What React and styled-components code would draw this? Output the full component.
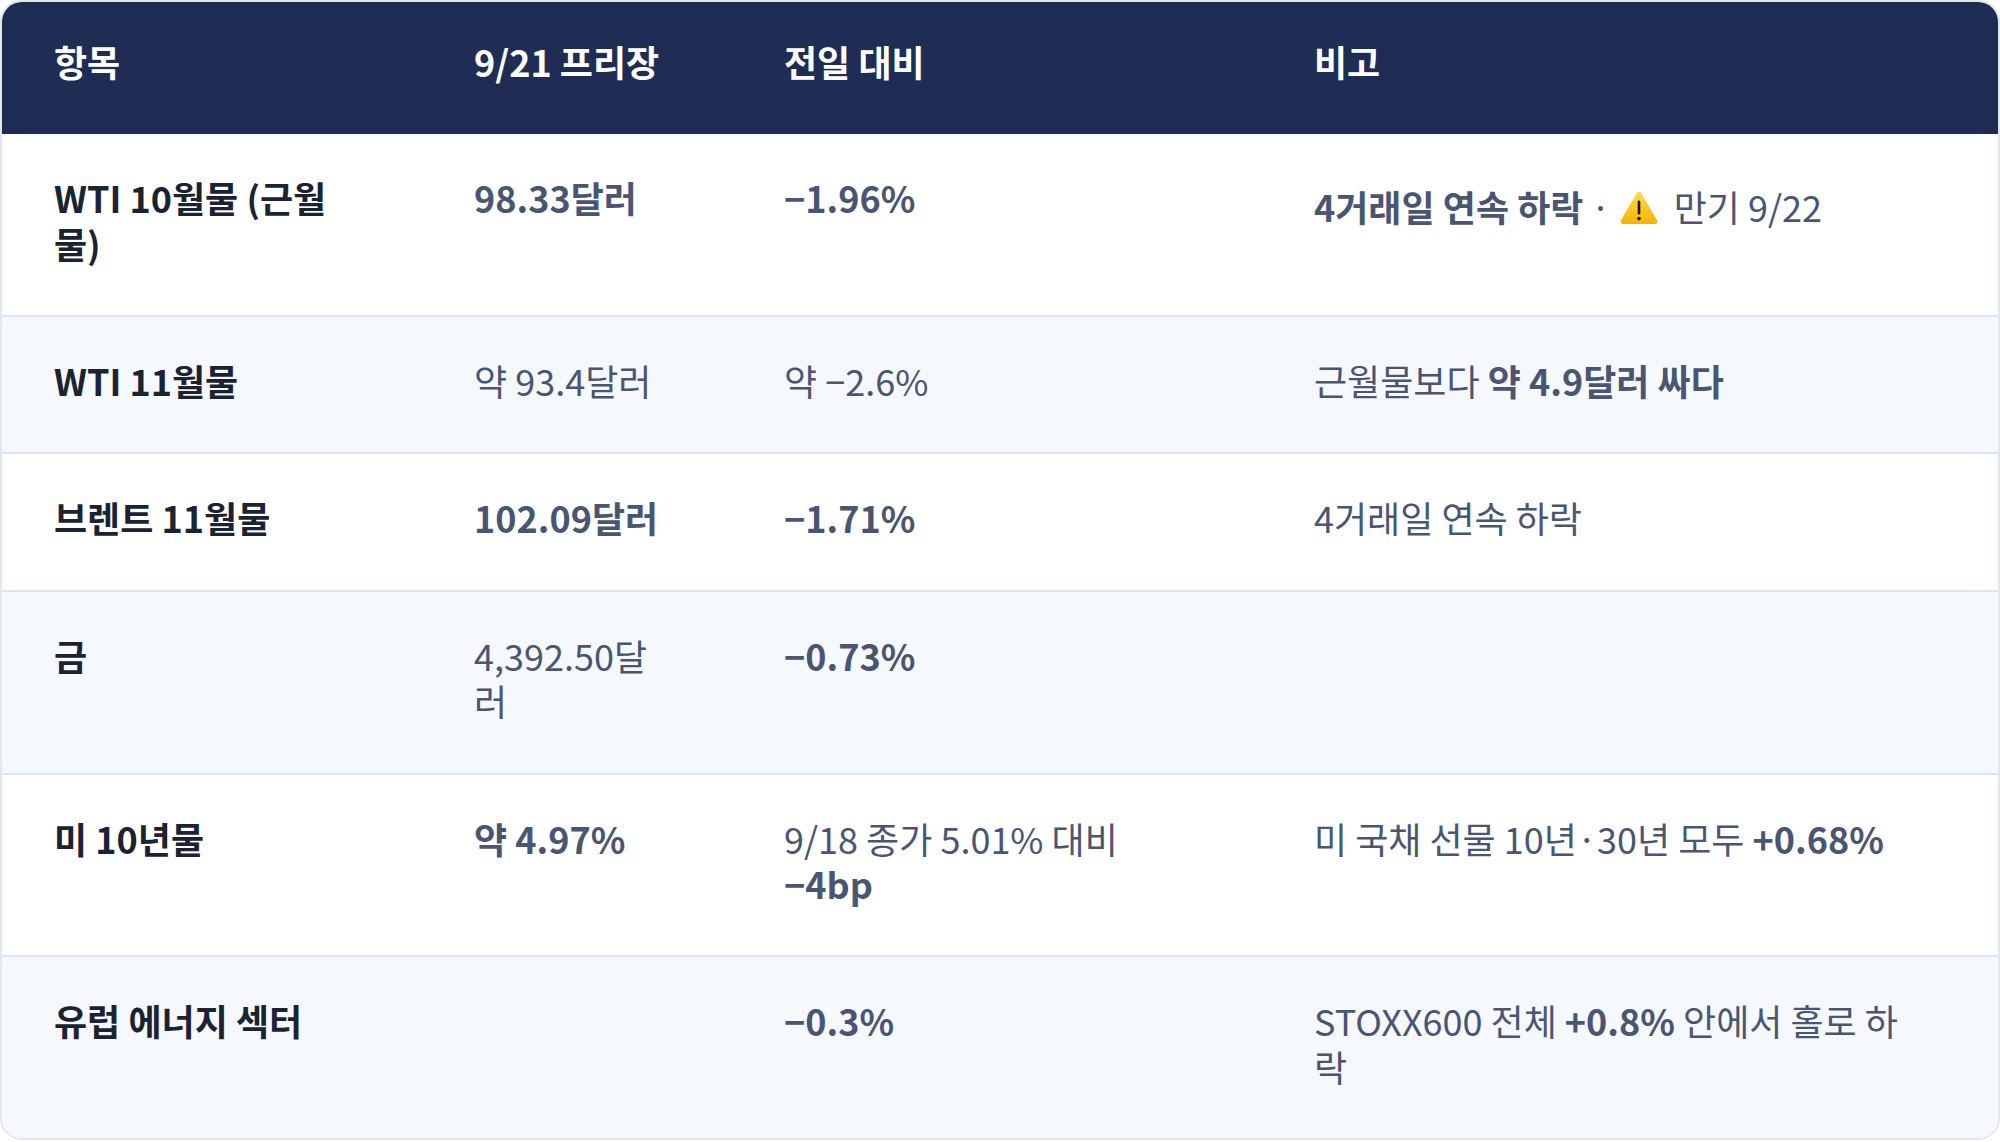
import React from "react";
import styled, { createGlobalStyle } from "styled-components";

const GlobalStyle = createGlobalStyle`
  html, body {
    margin: 0;
    padding: 0;
    background: #ffffff;
  }
  body {
    font-family: "Noto Sans CJK KR", "Noto Sans", sans-serif;
  }
`;

const Card = styled.div`
  width: 2000px;
  box-sizing: border-box;
  border: 2px solid #e1e6ef;
  border-radius: 22px;
  overflow: hidden;
  background: #ffffff;
`;

const Table = styled.table`
  width: 100%;
  border-collapse: collapse;
  table-layout: fixed;
  font-size: 36px;
  line-height: 1.26;
`;

const HeadCell = styled.th`
  background: #1f2c53;
  color: #ffffff;
  font-weight: 700;
  text-align: left;
  padding: 37px 52px 50px;
`;

const Row = styled.tr`
  background: ${(p) => (p.$alt ? "#f5f8fd" : "#ffffff")};
  border-top: 2px solid #dfe5f0;
  &:first-child {
    border-top: none;
  }
`;

const Cell = styled.td`
  vertical-align: top;
  padding: 41px ${(p) => p.$right || 60}px 49px 52px;
  color: #4a5572;
  font-weight: 400;
`;

const ItemCell = styled(Cell)`
  color: #1b2232;
  font-weight: 700;
`;

const Strong = styled.b`
  font-weight: 700;
`;

const Note = styled.div`
  padding-top: ${(p) => (p.$lifted ? "9px" : "0")};
`;

const Dot = styled.span`
  margin: 0 9px 0 7px;
  font-weight: 400;
`;

const WarnIcon = () => (
  <svg
    width="38"
    height="33"
    viewBox="0 0 38 33"
    style={{ verticalAlign: "-2px", marginRight: "16px" }}
  >
    <defs>
      <linearGradient id="warn" x1="0" y1="0" x2="0" y2="1">
        <stop offset="0" stopColor="#ffdc4e" />
        <stop offset="1" stopColor="#f5b300" />
      </linearGradient>
    </defs>
    <path
      d="M16.6 2.2c1.1-1.9 3.7-1.9 4.8 0l15.6 27c1 1.8-0.3 3.8-2.4 3.8H3.4c-2.1 0-3.4-2-2.4-3.8z"
      fill="url(#warn)"
    />
    <rect x="17.7" y="9.5" width="2.6" height="14" rx="1.3" fill="#161616" />
    <circle cx="19" cy="27.6" r="1.8" fill="#161616" />
  </svg>
);

const rows = [
  {
    item: "WTI 10월물 (근월물)",
    price: <Strong>98.33달러</Strong>,
    change: <Strong>−1.96%</Strong>,
    note: (
      <Note $lifted>
        <Strong>4거래일 연속 하락</Strong>
        <Dot>·</Dot>
        <WarnIcon />
        만기 9/22
      </Note>
    ),
  },
  {
    item: "WTI 11월물",
    price: "약 93.4달러",
    change: "약 −2.6%",
    note: (
      <>
        근월물보다 <Strong>약 4.9달러 싸다</Strong>
      </>
    ),
  },
  {
    item: "브렌트 11월물",
    price: <Strong>102.09달러</Strong>,
    change: <Strong>−1.71%</Strong>,
    note: "4거래일 연속 하락",
  },
  {
    item: "금",
    price: "4,392.50달러",
    change: <Strong>−0.73%</Strong>,
    note: "",
  },
  {
    item: "미 10년물",
    price: <Strong>약 4.97%</Strong>,
    change: (
      <>
        9/18 종가 5.01% 대비 <Strong>−4bp</Strong>
      </>
    ),
    note: (
      <>
        미 국채 선물 10년·30년 모두 <Strong>+0.68%</Strong>
      </>
    ),
  },
  {
    item: "유럽 에너지 섹터",
    price: "",
    change: <Strong>−0.3%</Strong>,
    note: (
      <>
        STOXX600 전체 <Strong>+0.8%</Strong> 안에서 홀로 하락
      </>
    ),
  },
];

export default function App() {
  return (
    <>
      <GlobalStyle />
      <Card>
        <Table>
          <colgroup>
            <col style={{ width: "420px" }} />
            <col style={{ width: "310px" }} />
            <col style={{ width: "530px" }} />
            <col />
          </colgroup>
          <thead>
            <tr>
              <HeadCell>항목</HeadCell>
              <HeadCell>9/21 프리장</HeadCell>
              <HeadCell>전일 대비</HeadCell>
              <HeadCell>비고</HeadCell>
            </tr>
          </thead>
          <tbody>
            {rows.map((r, i) => (
              <Row key={r.item} $alt={i % 2 === 1}>
                <ItemCell>{r.item}</ItemCell>
                <Cell>{r.price}</Cell>
                <Cell>{r.change}</Cell>
                <Cell $right={100}>{r.note}</Cell>
              </Row>
            ))}
          </tbody>
        </Table>
      </Card>
    </>
  );
}
